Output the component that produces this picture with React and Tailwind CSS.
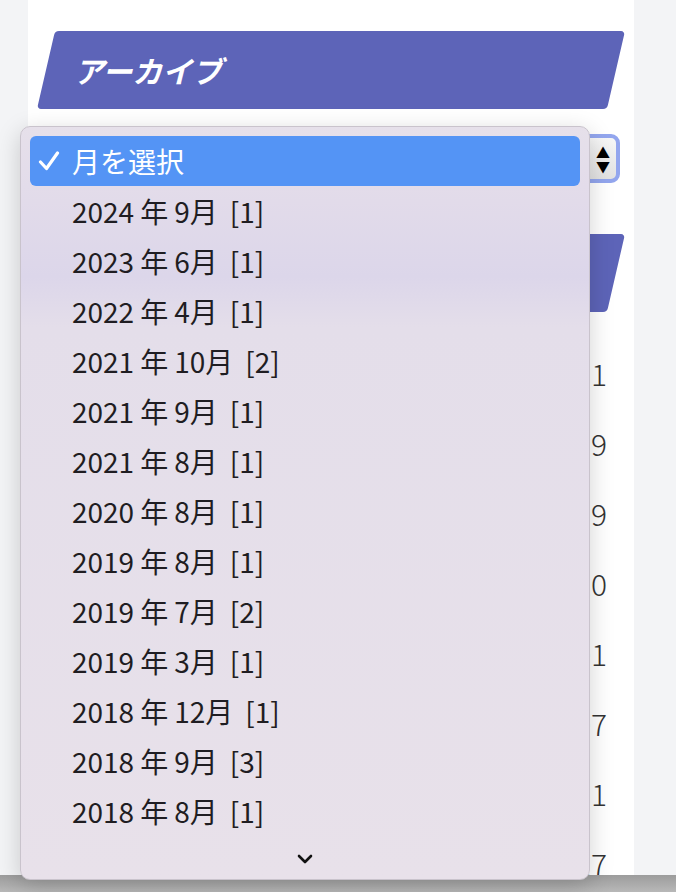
import React from 'react';

const months = [
  ['2024', '9', '1'],
  ['2023', '6', '1'],
  ['2022', '4', '1'],
  ['2021', '10', '2'],
  ['2021', '9', '1'],
  ['2021', '8', '1'],
  ['2020', '8', '1'],
  ['2019', '8', '1'],
  ['2019', '7', '2'],
  ['2019', '3', '1'],
  ['2018', '12', '1'],
  ['2018', '9', '3'],
  ['2018', '8', '1'],
];

const recent = ['2024.09.11', '2023.06.19', '2022.04.09', '2021.10.20', '2021.10.01', '2021.09.07', '2021.08.31', '2020.08.17'];

const Heading = ({ children }) => (
  <div className="ml-[18px] mr-[18px] h-[78px] -skew-x-[13deg] rounded-[4px] bg-[#5d64b8]">
    <div className="flex h-full skew-x-[13deg] items-center pl-[28px] text-[30px] font-bold italic text-white">
      {children}
    </div>
  </div>
);

const App = () => {
  return (
    <div
      className="relative h-[892px] w-[676px] overflow-hidden bg-[#f3f4f6]"
      style={{ fontFamily: '"Noto Sans CJK JP", "Noto Sans", sans-serif' }}
    >
      <div className="ml-[28px] h-[892px] w-[606px] bg-white pt-[31px]">
        <Heading>アーカイブ</Heading>

        <div className="ml-[8px] mr-[14px] mt-[25px] flex h-[49px] items-center justify-end rounded-[9px] border-[4px] border-[#93a6ee] bg-[linear-gradient(to_bottom,#f7f7f7,#e2e2e2)] pr-[6px]">
          <div className="flex flex-col items-center leading-none text-black">
            <span className="text-[14px]">▲</span>
            <span className="text-[14px]">▼</span>
          </div>
        </div>

        <div className="mt-[51px]">
          <Heading>最近の投稿</Heading>
        </div>

        <div className="mr-[27px] mt-[26px] flex flex-col items-end">
          {recent.map((d) => (
            <div key={d} className="flex h-[70px] items-center text-[30px] font-light text-[#333]">
              {d}
            </div>
          ))}
        </div>
      </div>

      <div className="absolute bottom-0 left-0 h-[17px] w-full bg-[linear-gradient(to_bottom,#9c9c9c,#b8b8b8)]" />

      <div className="absolute left-[20px] top-[126px] h-[754px] w-[570px] rounded-[10px] border border-[#c9c3cc] bg-[linear-gradient(to_bottom,#e6e0ea_0px,#e3dcea_60px,#dcd6ea_150px,#e4deea_200px,#e8e1ea_100%)] px-[9px] pt-[9px] shadow-[0_6px_24px_rgba(0,0,0,0.18)]">
        <div className="flex h-[50px] items-center rounded-[6px] bg-[#5494f5] pl-[8px] text-[28px] leading-none text-white">
          <svg width="22" height="20" viewBox="0 0 22 20" className="mr-[12px]">
            <path d="M2.5 11 L8.5 17.5 L19.5 2" fill="none" stroke="white" strokeWidth="3.2" strokeLinecap="round" strokeLinejoin="round" />
          </svg>
          <span>月を選択</span>
        </div>
        {months.map(([y, m, n]) => (
          <div key={y + m} className="flex h-[50px] items-center pl-[42px] text-[28px] leading-none text-[#1f1d22]">
            <span>{y}</span>
            <span className="mx-[6px]">年</span>
            <span>{m}月</span>
            <span className="ml-[12px]">[{n}]</span>
          </div>
        ))}
        <div className="flex justify-center pt-[18px]">
          <svg width="16" height="10" viewBox="0 0 16 10">
            <path d="M2 2 L8 8 L14 2" fill="none" stroke="#111" strokeWidth="2.6" strokeLinecap="round" strokeLinejoin="round" />
          </svg>
        </div>
      </div>
    </div>
  );
};

export default App;
